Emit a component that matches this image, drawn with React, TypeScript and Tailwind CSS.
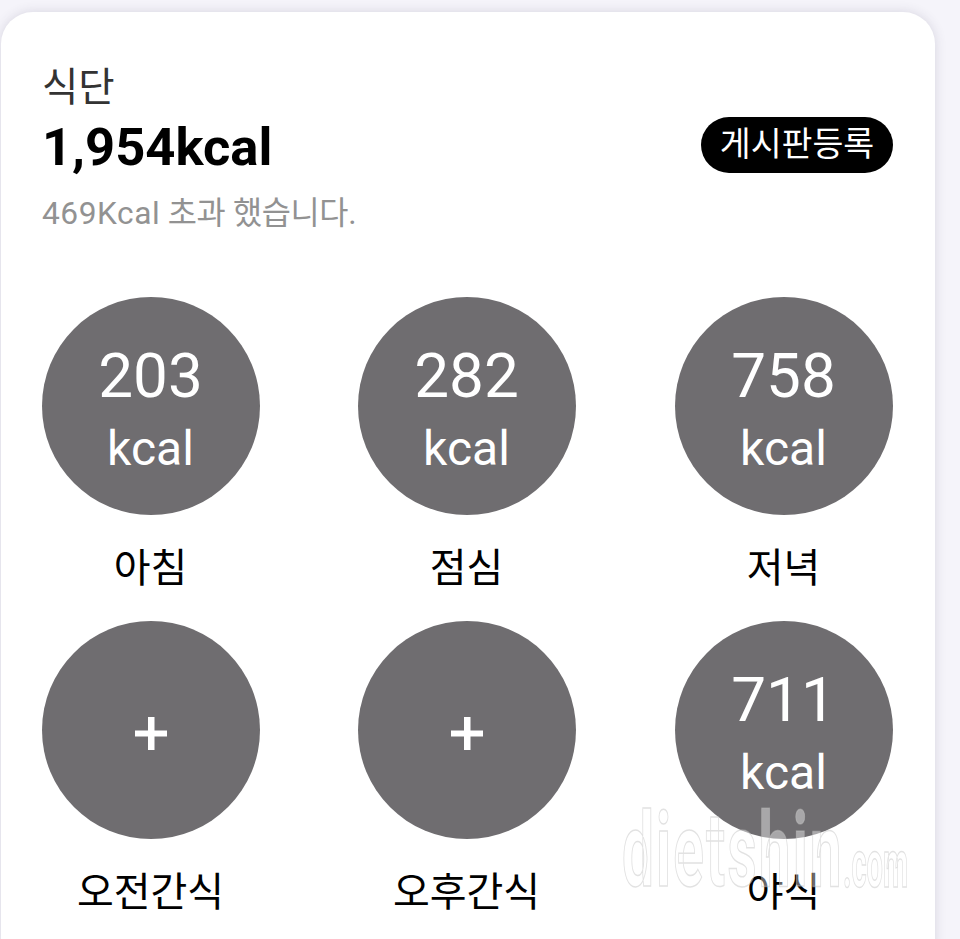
import React from "react";

type Meal = { label: string; kcal?: number };

const meals: Meal[] = [
  { label: "아침", kcal: 203 },
  { label: "점심", kcal: 282 },
  { label: "저녁", kcal: 758 },
  { label: "오전간식" },
  { label: "오후간식" },
  { label: "야식", kcal: 711 },
];

function MealCircle({ meal }: { meal: Meal }) {
  return (
    <div className="flex w-[218px] flex-col items-center">
      <div className="flex h-[218px] w-[218px] flex-col items-center rounded-full bg-[#6f6d70] text-white">
        {meal.kcal !== undefined ? (
          <>
            <span className="mr-px mt-[44px] text-[62px] leading-[70px]">{meal.kcal}</span>
            <span className="mr-px mt-[11px] text-[48px] leading-[54px]">kcal</span>
          </>
        ) : (
          <span className="mt-[96px] h-[33px] w-[32px]">
            <svg viewBox="0 0 32 33" className="h-full w-full" fill="#ffffff">
              <rect x="13" y="0" width="6.5" height="33" />
              <rect x="0" y="13.5" width="32" height="6" />
            </svg>
          </span>
        )}
      </div>
      <span className="mr-px mt-[28px] text-[40px] leading-[52px] text-black">{meal.label}</span>
    </div>
  );
}

export default function App() {
  return (
    <div
      className="relative h-[939px] w-[960px] overflow-hidden bg-[#f5f4fa] pl-px pt-3"
      style={{ fontFamily: 'Roboto, "Noto Sans CJK KR", sans-serif' }}
    >
      <section className="h-[960px] w-[934px] rounded-[32px] bg-white pl-[41px] pr-[42px] pt-[51px] shadow-[0_0_12px_rgba(60,55,90,0.16)]">
        <header className="flex items-center justify-between">
          <div className="flex flex-col">
            <h2 className="text-[39.5px] font-normal leading-[50px] text-[#333333]">식단</h2>
            <p className="mt-[4px] text-[52.5px] font-bold leading-[60px] text-black">1,954kcal</p>
            <p className="mt-[15px] text-[31.7px] leading-[44px] tracking-[-0.35px] text-[#929292]">
              <span className="tracking-[0.55px]">469Kcal</span> 초과 했습니다.
            </p>
          </div>
          <button className="mb-[9px] flex h-[56px] w-[192px] items-center justify-center rounded-full bg-black text-[33.6px] leading-none text-white">
            게시판등록
          </button>
        </header>
        <div className="mt-[61px] grid grid-cols-[218px_219px_218px] gap-x-[98px] gap-y-[26px]">
          {meals.map((meal) => (
            <MealCircle key={meal.label} meal={meal} />
          ))}
        </div>
      </section>
      {/* site watermark over the lower right corner */}
      <span className="pointer-events-none absolute left-[622px] top-[801px] origin-top-left scale-x-[0.55] whitespace-nowrap text-[103px] font-bold leading-[100px] tracking-[4px] text-white/40 blur-[0.5px] [-webkit-text-stroke:1.5px_rgba(190,190,190,0.45)]">
        dietshin
      </span>
      <span className="pointer-events-none absolute left-[843px] top-[835px] origin-top-left scale-x-[0.44] whitespace-nowrap text-[66px] font-bold leading-[60px] text-white/40 blur-[0.5px] [-webkit-text-stroke:1.5px_rgba(190,190,190,0.45)]">
        .com
      </span>
    </div>
  );
}
